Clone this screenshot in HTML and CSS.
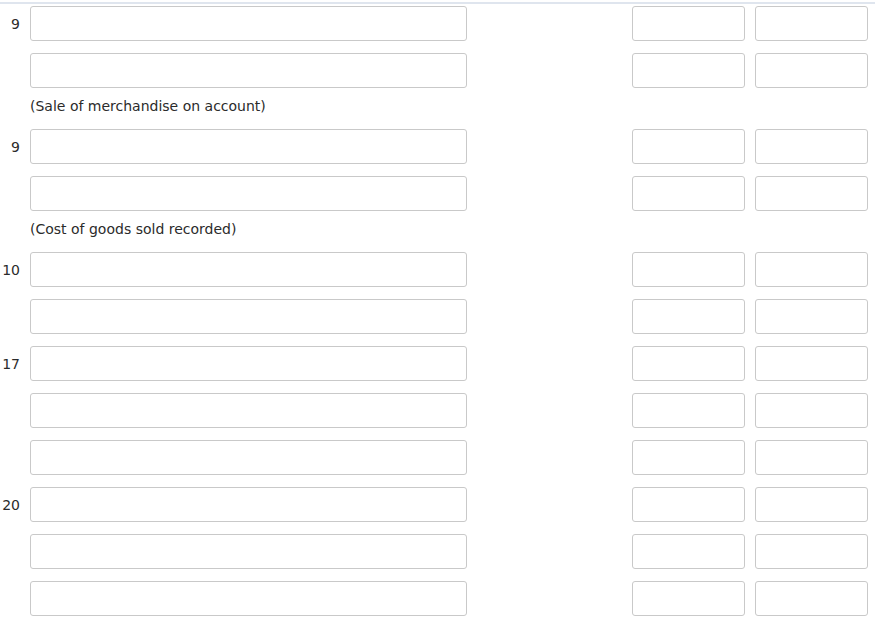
FILE: index.html
```html
<!DOCTYPE html>
<html lang="en">
<head>
  <meta charset="UTF-8" />
  <title>Journal Entries</title>
  <link rel="stylesheet" href="styles.css">
</head>
<body>
  <div class="journal">
    <div class="entry-row">
      <span class="date">9</span>
      <input class="account" type="text">
      <input class="amount debit" type="text">
      <input class="amount" type="text">
    </div>
    <div class="entry-row">
      <span class="date"></span>
      <input class="account" type="text">
      <input class="amount debit" type="text">
      <input class="amount" type="text">
    </div>
    <div class="note">(Sale of merchandise on account)</div>

    <div class="entry-row">
      <span class="date">9</span>
      <input class="account" type="text">
      <input class="amount debit" type="text">
      <input class="amount" type="text">
    </div>
    <div class="entry-row">
      <span class="date"></span>
      <input class="account" type="text">
      <input class="amount debit" type="text">
      <input class="amount" type="text">
    </div>
    <div class="note">(Cost of goods sold recorded)</div>

    <div class="entry-row">
      <span class="date">10</span>
      <input class="account" type="text">
      <input class="amount debit" type="text">
      <input class="amount" type="text">
    </div>
    <div class="entry-row">
      <span class="date"></span>
      <input class="account" type="text">
      <input class="amount debit" type="text">
      <input class="amount" type="text">
    </div>

    <div class="entry-row">
      <span class="date">17</span>
      <input class="account" type="text">
      <input class="amount debit" type="text">
      <input class="amount" type="text">
    </div>
    <div class="entry-row">
      <span class="date"></span>
      <input class="account" type="text">
      <input class="amount debit" type="text">
      <input class="amount" type="text">
    </div>
    <div class="entry-row">
      <span class="date"></span>
      <input class="account" type="text">
      <input class="amount debit" type="text">
      <input class="amount" type="text">
    </div>

    <div class="entry-row">
      <span class="date">20</span>
      <input class="account" type="text">
      <input class="amount debit" type="text">
      <input class="amount" type="text">
    </div>
    <div class="entry-row">
      <span class="date"></span>
      <input class="account" type="text">
      <input class="amount debit" type="text">
      <input class="amount" type="text">
    </div>
    <div class="entry-row">
      <span class="date"></span>
      <input class="account" type="text">
      <input class="amount debit" type="text">
      <input class="amount" type="text">
    </div>
  </div>
</body>
</html>
```

FILE: styles.css
```css
body {
  margin: 0;
  padding-top: 2px;
  background: #fff;
  font-family: "DejaVu Sans", Verdana, sans-serif;
  font-size: 14px;
  color: #2b2b2b;
}

.journal {
  border-top: 2px solid #dfe5ee;
  padding-top: 2px;
}

.entry-row {
  display: flex;
  align-items: center;
  height: 35px;
  margin-bottom: 12px;
}

.date {
  width: 20px;
  text-align: right;
  margin-right: 10px;
}

input {
  box-sizing: border-box;
  height: 35px;
  margin: 0;
  border: 1px solid #c9c9c9;
  border-radius: 3px;
  background: #fff;
}

.account {
  width: 437px;
}

.amount {
  width: 113px;
}

.debit {
  margin-left: 165px;
  margin-right: 10px;
}

.note {
  margin: 0 0 12px 30px;
  height: 17px;
  line-height: 13px;
}
```
